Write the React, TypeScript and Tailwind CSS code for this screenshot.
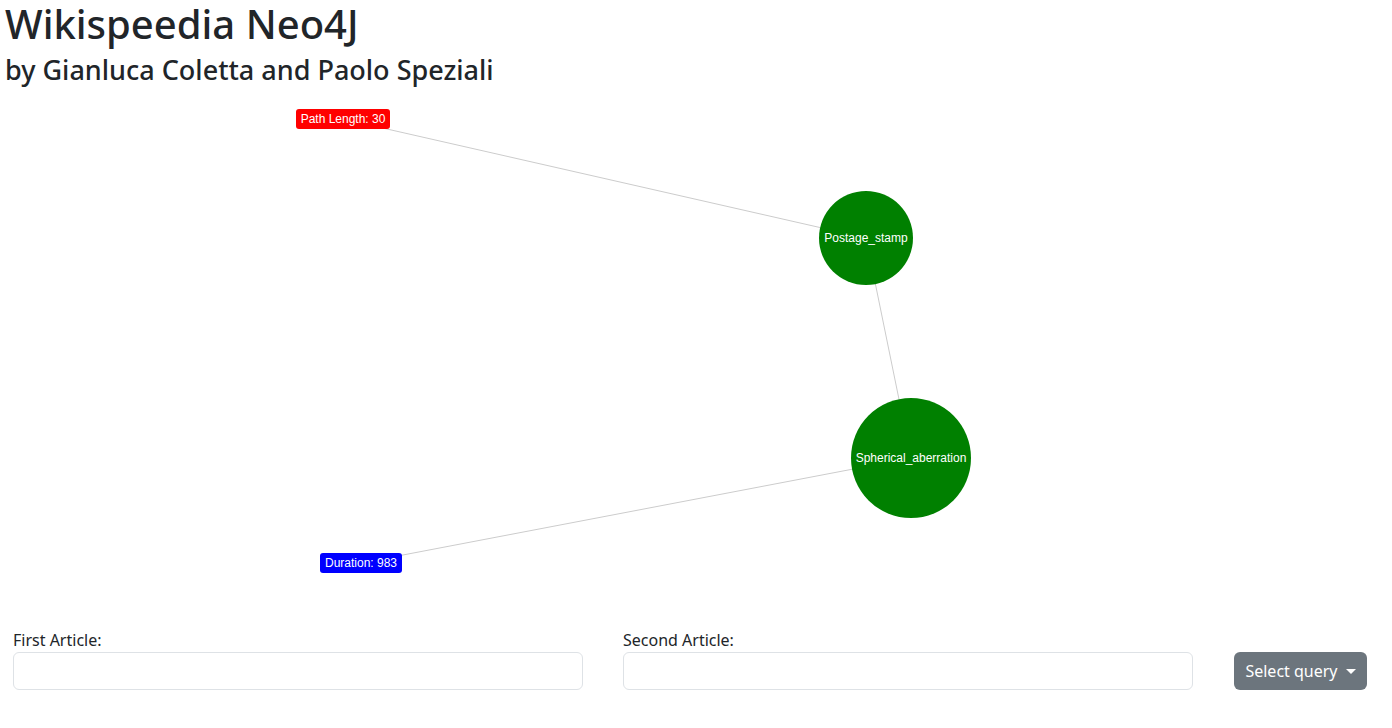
import React from "react";

const font = { fontFamily: '"Noto Sans", "Open Sans", sans-serif' };

function Graph() {
  return (
    <svg width="1392" height="534" viewBox="0 94 1392 534" className="block">
      <line x1="343" y1="119" x2="866" y2="238" stroke="#cccccc" strokeWidth="1" />
      <line x1="866" y1="238" x2="911" y2="458" stroke="#cccccc" strokeWidth="1" />
      <line x1="911" y1="458" x2="361" y2="563" stroke="#cccccc" strokeWidth="1" />
      <circle cx="866" cy="238" r="47" fill="#008000" />
      <circle cx="911" cy="458" r="60" fill="#008000" />
      <g fontFamily='"Liberation Sans", Arial, sans-serif' fontSize="12" fill="#ffffff" textAnchor="middle">
        <text x="866" y="242">Postage_stamp</text>
        <text x="911" y="462">Spherical_aberration</text>
      </g>
      <rect x="296" y="109" width="94" height="20" rx="3" fill="#ff0000" />
      <text x="343" y="123" fontFamily='"Liberation Sans", Arial, sans-serif' fontSize="12" fill="#ffffff" textAnchor="middle">
        Path Length: 30
      </text>
      <rect x="320" y="553" width="82" height="20" rx="3" fill="#0000ff" />
      <text x="361" y="567" fontFamily='"Liberation Sans", Arial, sans-serif' fontSize="12" fill="#ffffff" textAnchor="middle">
        Duration: 983
      </text>
    </svg>
  );
}

export default function App() {
  return (
    <div className="w-[1392px] h-[728px] bg-white text-[#212529] overflow-hidden" style={font}>
      <h1 className="pl-[5px] text-[40px] leading-[48px] font-medium">Wikispeedia Neo4J</h1>
      <h2 className="pl-[5px] pt-[3px] text-[27px] leading-[38px] font-medium mb-[5px]">by Gianluca Coletta and Paolo Speziali</h2>
      <Graph />
      <div className="flex items-end pl-[13px]">
        <div className="w-[570px]">
          <label className="block text-[16px] leading-[24px]">First Article:</label>
          <input className="block w-full h-[38px] border border-[#dee2e6] rounded-[6px] bg-white" />
        </div>
        <div className="w-[570px] ml-[40px]">
          <label className="block text-[16px] leading-[24px]">Second Article:</label>
          <input className="block w-full h-[38px] border border-[#dee2e6] rounded-[6px] bg-white" />
        </div>
        <button className="ml-[41px] h-[38px] w-[133px] rounded-[6px] bg-[#6c757d] text-white text-[16px] flex items-center justify-center gap-[8px]">
          <span>Select query</span>
          <span className="w-0 h-0 border-l-[5px] border-r-[5px] border-t-[5px] border-l-transparent border-r-transparent border-t-white" />
        </button>
      </div>
    </div>
  );
}
